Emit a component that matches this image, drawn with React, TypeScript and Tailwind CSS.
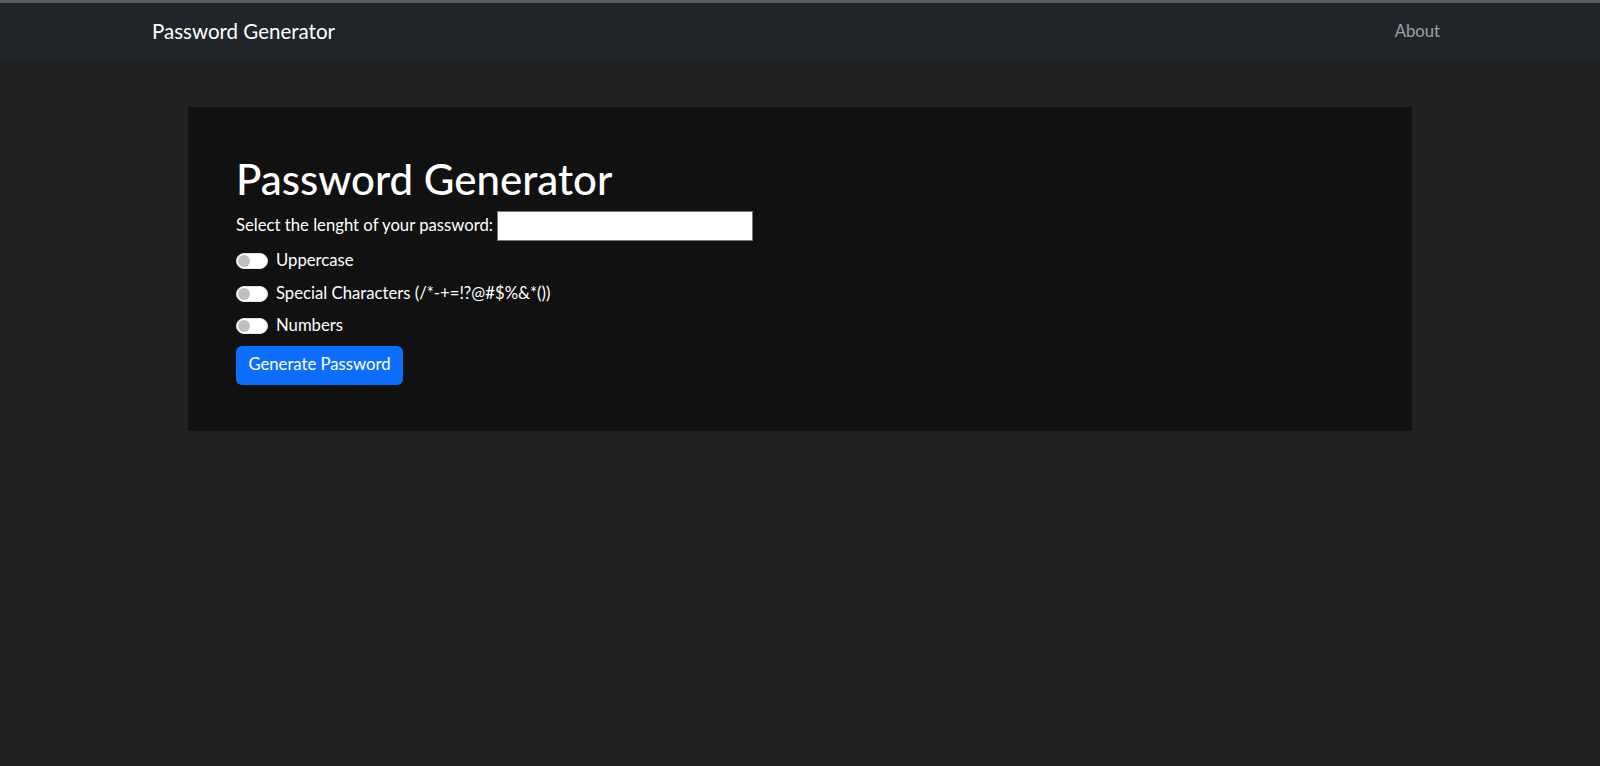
import { useState } from 'react';

const FONT = { fontFamily: 'Lato, "Open Sans", sans-serif' };

function Toggle({ label }: { label: string }) {
  const [on, setOn] = useState(false);
  return (
    <label className="flex h-6 cursor-pointer items-center gap-2 text-[16.7px] text-white">
      <button
        type="button"
        onClick={() => setOn(!on)}
        className={`relative h-4 w-8 rounded-full border ${
          on ? 'border-[#0d6efd] bg-[#0d6efd]' : 'border-[#dee2e6] bg-white'
        }`}
      >
        <span
          className={`absolute top-[1px] h-3 w-3 rounded-full ${
            on ? 'left-[17px] bg-white' : 'left-[1px] bg-[#bfbfbf]'
          }`}
        />
      </button>
      <span>{label}</span>
    </label>
  );
}

export default function App() {
  const [length, setLength] = useState('');

  return (
    <div className="min-h-[766px] bg-[#212121]" style={FONT}>
      <div className="h-[3px] bg-[#5c5c5c]" />
      <nav className="flex h-14 items-center justify-between bg-[#212529] pl-[152px] pr-[160px]">
        <span className="text-[20.5px] text-white">Password Generator</span>
        <a className="pt-[2px] text-[16.7px] text-white/55">About</a>
      </nav>

      <main className="flex justify-center pt-12">
        <section className="w-[1224px] bg-[#111111] px-12 pt-12 pb-[46px]">
          <h1 className="mb-[8px] text-[42px] font-medium leading-[48px] text-white">
            Password Generator
          </h1>
          <div className="mb-[8px] flex items-center gap-1 text-[16.7px] text-white">
            <span>Select the lenght of your password:</span>
            <input
              type="number"
              value={length}
              onChange={(e) => setLength(e.target.value)}
              className="h-[30px] w-[256px] border border-[#767676] bg-white px-1 text-black outline-none"
            />
          </div>
          <div className="flex flex-col gap-[8.5px]">
            <Toggle label="Uppercase" />
            <Toggle label="Special Characters (/*-+=!?@#$%&*())" />
            <Toggle label="Numbers" />
          </div>
          <button
            type="button"
            className="mt-[7.5px] h-[39px] w-[167px] rounded-md bg-[#0d6efd] text-[16.7px] text-white"
          >
            Generate Password
          </button>
        </section>
      </main>
    </div>
  );
}
